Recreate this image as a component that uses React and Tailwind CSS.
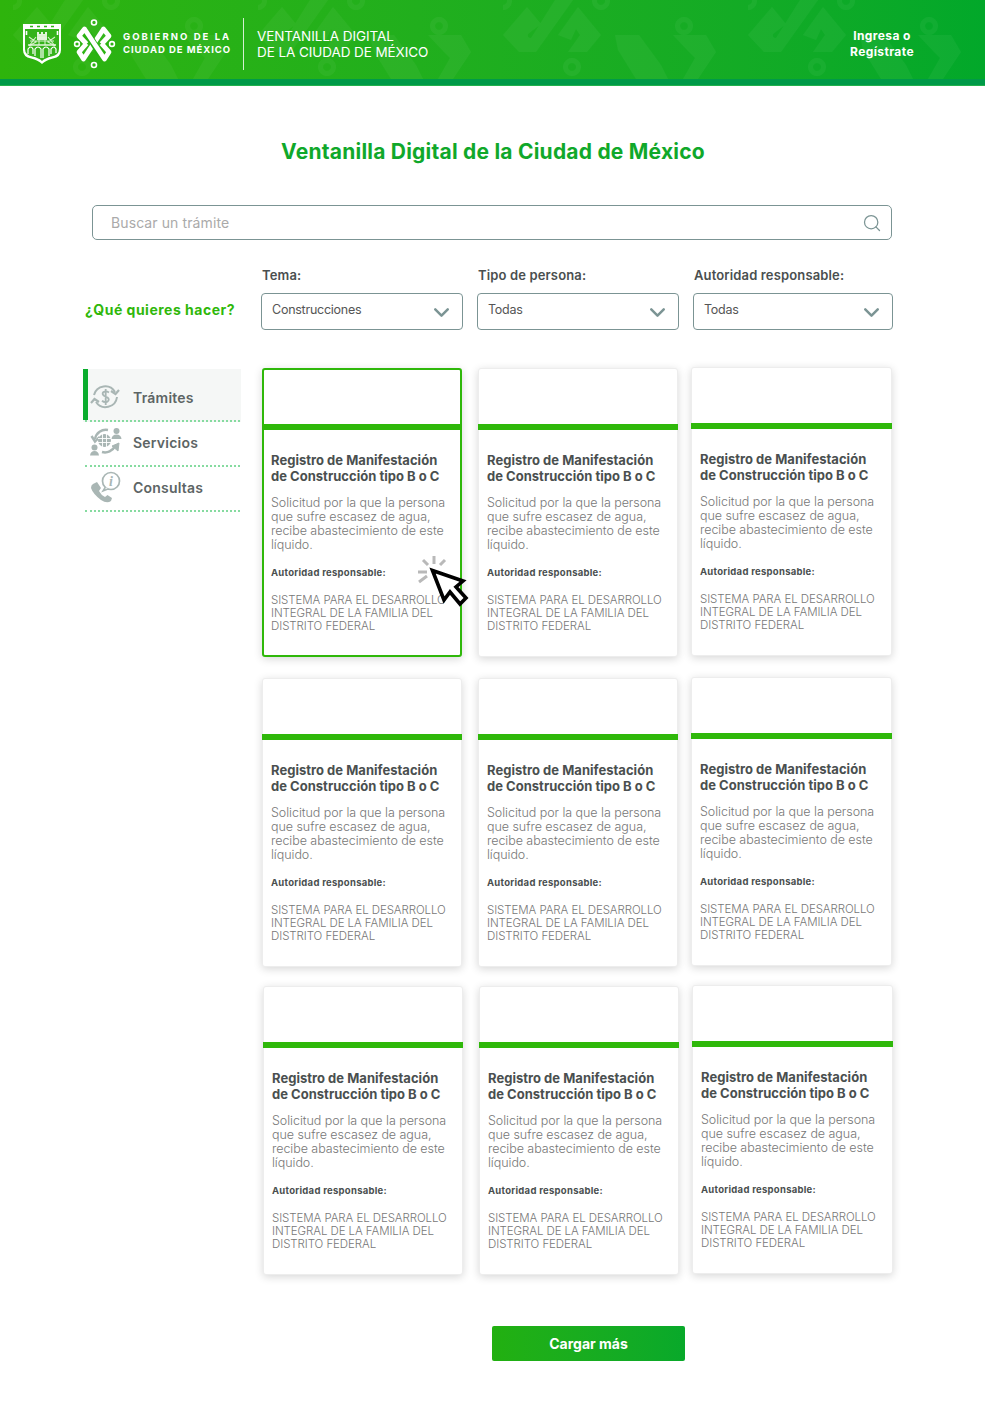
import React from 'react';
import { ChevronDown, Search } from 'lucide-react';

const FONT = { fontFamily: 'Inter, "Open Sans", "Liberation Sans", sans-serif' };

// marca de agua del encabezado
const HeaderPattern = () => (
  <svg className="absolute inset-0 h-[79px] w-full" aria-hidden="true">
    <defs>
      <pattern id="cdmx" x="13" y="0" width="245" height="79" patternUnits="userSpaceOnUse">
        <g fill="#fff" fillOpacity="0.045">
          <path d="M0 35 L24 7 L38 24 L25 34 Q24 38 28 38 L52 0 L70 0 L33 52 L16 52 Z" />
          <path d="M55 35 L75 7 L98 35 L84 52 L65 52 L77 35 L73 29 L68 40 Z" />
          <path d="M119 35 L143 35 L165 65 L172 79 L140 79 L122 50 Z" transform="translate(-7 0)" />
          <path d="M170 35 L203 35 L213 52 L195 79 L180 79 L192 58 L186 52 Z" />
          <path fillRule="evenodd" d="M69 58 a9 9 0 1 0 .01 0 Z M69 63 a4 4 0 1 1 -.01 0 Z" />
          <path fillRule="evenodd" d="M181 17 a9 9 0 1 0 .01 0 Z M181 22 a4 4 0 1 1 -.01 0 Z" />
          <path fillRule="evenodd" d="M0 -8 a9 9 0 1 0 .01 0 Z M0 -3 a4 4 0 1 1 -.01 0 Z" />
          <path fillRule="evenodd" d="M98 -8 a9 9 0 1 0 .01 0 Z M98 -3 a4 4 0 1 1 -.01 0 Z" />
        </g>
      </pattern>
    </defs>
    <rect width="100%" height="100%" fill="url(#cdmx)" />
  </svg>
);

const Shield = () => (
  <svg width="40" height="42" viewBox="0 0 40 42" className="shrink-0">
    <path d="M1 1 H39 V27 Q39 34 31 35.5 Q24 37 20 41 Q16 37 9 35.5 Q1 34 1 27 Z" fill="#fff" />
    <path d="M3 6 H37 V26 Q37 32 29.5 33.5 Q23 35 20 38 Q17 35 10.5 33.5 Q3 32 3 26 Z" fill="#35b31a" />
    <path d="M15 9 h2 v2 h2 v-2 h2 v2 h2 v-2 h2 v8 h-10 Z" fill="#e4f5dc" />
    <path d="M7 14 L14 19 L7 23 L14 14 M33 14 L26 19 L33 23 L26 14 M8 18 h24 M15 13 h10 M17 17 v5 M23 17 v5" stroke="#d4f0c8" strokeWidth="1.1" fill="none" />
    <path d="M6 22 h28" stroke="#e4f5dc" strokeWidth="1.5" />
    <path d="M6 31 v-5 q3 -4 5 0 v5 M13 33 v-7 q3 -4 6 0 v9 M21 35 v-9 q3 -4 6 0 v7 M29 31 v-5 q3 -4 5 0 v4" fill="none" stroke="#fff" strokeWidth="1.2" />
    <path d="M4.5 8 v4 M35.5 8 v4" stroke="#fff" strokeWidth="1.6" />
    <path d="M8 3.5 h3 M15 3.5 h3 M22 3.5 h3 M29 3.5 h3" stroke="#35b31a" strokeWidth="1.4" />
  </svg>
);

const Logo = () => (
  <svg width="44" height="50" viewBox="0 0 44 50" className="shrink-0">
    <g fill="none" stroke="#fff" strokeWidth="1.6">
      <circle cx="21" cy="3.5" r="2.5" />
      <circle cx="21" cy="46" r="2.5" />
      <circle cx="4" cy="25" r="2.4" />
      <circle cx="39" cy="25" r="2.4" />
    </g>
    <g fill="none" strokeLinejoin="round">
      <path d="M28.5 25 L36 17 L30.5 10 L10.5 40 L6 33 L13.5 24.5" stroke="#fff" strokeWidth="4.8" />
      <path d="M15 15 L27 35" stroke="#25b012" strokeWidth="7" />
      <path d="M13.5 25 L6 17 L11.5 10 L31.5 40 L36 33 L28.5 24.5" stroke="#fff" strokeWidth="4.8" />
    </g>
  </svg>
);

const Header = () => (
  <header className="relative h-[86px] border-b border-[#22b14c]">
    <div className="relative h-[79px] bg-gradient-to-r from-[#2eb40c] to-[#02a82a]">
      <HeaderPattern />
      <div className="relative flex h-full items-center pl-[22px]">
        <div className="mt-[8px]"><Shield /></div>
        <div className="mt-[8px] ml-[11px]"><Logo /></div>
        <div className="mt-[8px] ml-[6px] w-[115px] text-[9.5px] leading-[12.5px] font-bold tracking-[2.05px] text-white whitespace-nowrap">
          <div>GOBIERNO DE LA</div>
          <div className="tracking-[0.95px]">CIUDAD DE MÉXICO</div>
        </div>
        <div className="mt-[8px] ml-[5px] h-[52px] w-px bg-white/80"></div>
        <div className="mt-[8px] ml-[13px] text-[13.5px] leading-[16px] tracking-[-0.08px] text-white whitespace-nowrap">
          <div>VENTANILLA DIGITAL</div>
          <div>DE LA CIUDAD DE MÉXICO</div>
        </div>
        <div className="absolute top-[28px] left-[832px] w-[100px] text-center text-[12px] leading-[16px] font-bold tracking-[0.4px] text-white">
          <div>Ingresa o</div>
          <div>Regístrate</div>
        </div>
      </div>
    </div>
    <div className="h-[6px] bg-[#009a48]"></div>
  </header>
);

const FilterSelect = ({ label, value, className }) => (
  <div className={className}>
    <div className="pl-px text-[13px] leading-[16px] font-semibold tracking-[0.14px] text-[#4a4f4f]">{label}</div>
    <div className="mt-[10px] flex h-[37px] items-center justify-between rounded-[4px] border border-[#7b9494] pr-[8px] pl-[10px] text-[12.5px] tracking-[-0.25px] text-[#555]">
      <span className="-mt-[2px]">{value}</span>
      <ChevronDown size={25} strokeWidth={2.4} className="mt-[1px] text-[#7b9494]" />
    </div>
  </div>
);

const IconTramites = () => (
  <svg width="32" height="30" viewBox="1 0 32 30" fill="none" stroke="#a9b6b4" strokeWidth="2">
    <path d="M5 13 A11.5 11.5 0 0 1 26 10" />
    <path d="M28 15 A11.5 11.5 0 0 1 7 20" />
    <path d="M30 8 L26.5 12 L22 9" strokeWidth="2.2" />
    <path d="M2 21 L5.5 17 L10 20" strokeWidth="2.2" />
    <path d="M20 10.5 Q17 8.5 14.5 10 Q12.5 12 15 13.8 L18.5 15.5 Q21 17.5 18.5 19.6 Q15.5 21 13 18.8 M16.7 7 V23" strokeWidth="1.8" />
  </svg>
);

const IconServicios = () => (
  <svg width="32" height="30" viewBox="0 0 32 30" fill="none" stroke="#a9b6b4">
    <path d="M5 12 A11 11 0 0 1 18 3" strokeWidth="2.4" />
    <path d="M1.5 9 L5 14.5 L9.5 10" strokeWidth="2.4" />
    <path d="M12 25 A11 11 0 0 0 25 19" strokeWidth="2.6" />
    <path d="M22 19 L29 16 L28 24 Z" fill="#a9b6b4" strokeWidth="1" />
    <circle cx="14.5" cy="13.5" r="6.5" fill="#a9b6b4" strokeWidth="0" />
    <path d="M8 11.5 H21 M8 15.5 H21 M12.5 7 V20 M16.5 7 V20" stroke="#fff" strokeWidth="0.9" />
    <g fill="#a9b6b4" stroke="none">
      <circle cx="26.5" cy="4" r="3" />
      <path d="M21.5 12 Q22 7.5 26.5 7.5 Q31 7.5 31.5 12 Z" />
      <circle cx="4.5" cy="20.5" r="3" />
      <path d="M0 28.5 Q0.5 24 4.5 24 Q8.5 24 9 28.5 Z" />
    </g>
  </svg>
);

const IconConsultas = () => (
  <svg width="32" height="32" viewBox="0 0 32 32" fill="none">
    <path d="M3 13 L7 11 L11 17 L9 20 Q11 24 15 26 L17.5 24 L22 27 L21 30 Q17 33 11 29 Q3 23 1 17 Q1 14 3 13 Z" fill="#a9b6b4" />
    <circle cx="21" cy="10" r="8.5" fill="#fff" stroke="#a9b6b4" strokeWidth="1.7" />
    <path d="M15.5 16 L13 20 L18.5 17.7" stroke="#a9b6b4" strokeWidth="1.5" fill="#fff" />
    <text x="21" y="15" textAnchor="middle" fontSize="14" fontWeight="700" fontStyle="italic" fontFamily='"Liberation Serif", serif' fill="#a9b6b4">i</text>
  </svg>
);

const SIDE_ITEMS = [
  { name: 'Trámites', icon: <IconTramites />, active: true },
  { name: 'Servicios', icon: <IconServicios /> },
  { name: 'Consultas', icon: <IconConsultas /> },
];

const Sidebar = () => (
  <aside className="w-[158px] shrink-0 pt-[1px]">
    {SIDE_ITEMS.map(item => (
      <div key={item.name} className={item.active ? 'bg-[#f5f7f6]' : ''}>
        <div className={`flex items-center ${item.active ? 'h-[51px]' : 'h-[43px] pl-[7px]'}`}>
          {item.active && <div className="mr-[2px] h-full w-[5px] bg-[#0aad2d]"></div>}
          <div className={`flex w-[32px] justify-center ${item.active ? 'mt-[5px]' : '-mt-[3px]'}`}>{item.icon}</div>
          <span className={`ml-[11px] text-[14px] font-semibold tracking-[0.22px] text-[#5d6565] ${item.active ? 'mt-[5px]' : '-mt-[3px]'}`}>{item.name}</span>
        </div>
        <div className="ml-[2px] w-[155px] border-b-2 border-dotted border-[#86dba0]"></div>
      </div>
    ))}
  </aside>
);

const Cursor = () => (
  <svg className="absolute top-[186px] left-[153px]" width="54" height="52" viewBox="0 0 54 52">
    <g stroke="#b9b9b9" strokeWidth="3">
      <path d="M17 0 V8" />
      <path d="M6 4 L11 9" />
      <path d="M28 4 L23 9" />
      <path d="M1 16 H10" />
      <path d="M2 26 L10 20" />
    </g>
    <path d="M15.5 14.5 L27 44 L33 36 L43 48 L49 42 L39 31 L46 25 Z" fill="#fff" stroke="#000" strokeWidth="3.6" strokeLinejoin="miter" />
  </svg>
);

const Card = ({ selected, className = '' }) => (
  <div className={`relative h-[289px] w-[200px] shrink-0 rounded-[3px] bg-white shadow-[0_2px_8px_rgba(0,0,0,0.16)] ${selected ? 'border-2 border-[#2fb80a]' : 'border border-[#ededed]'} ${className}`}>
    <div className={`${selected ? 'mt-[54px]' : 'mt-[55px] -mx-px'} h-[6px] bg-[#2fb80a]`}></div>
    <div className={`${selected ? 'px-[7px]' : 'px-[8px]'} pt-[22px]`}>
      <h3 className="text-[13px] leading-[16px] font-bold tracking-[0.02px] text-[#4a4f4f] whitespace-nowrap">Registro de Manifestación<br />de Construcción tipo B o C</h3>
      <p className="mt-[12px] text-[12.5px] leading-[14px] font-light tracking-[-0.05px] text-[#777] whitespace-nowrap">Solicitud por la que la persona<br />que sufre escasez de agua,<br />recibe abastecimiento de este<br />líquido.</p>
      <p className="mt-[14px] text-[9.5px] leading-[14px] font-bold tracking-[0.27px] text-[#4a4f4f]">Autoridad responsable:</p>
      <p className="mt-[14px] text-[11.5px] leading-[13px] font-light tracking-[-0.08px] text-[#777] whitespace-nowrap">SISTEMA PARA EL DESARROLLO<br />INTEGRAL DE LA FAMILIA DEL<br />DISTRITO FEDERAL</p>
    </div>
    {selected && <Cursor />}
  </div>
);

const CardRow = ({ first, shifted, className = '' }) => (
  <div className={`flex ${shifted ? 'ml-px' : ''} ${className}`}>
    <Card selected={first} />
    <Card className="ml-[16px]" />
    <Card className="ml-[13px] -mt-px w-[201px]" />
  </div>
);

export default function App() {
  return (
    <div className="h-[1407px] bg-white" style={FONT}>
      <Header />
      <main>
        <h1 className="mt-[51px] pl-px text-center text-[21px] leading-[30px] font-bold tracking-[0.22px] text-[#10a82a]">Ventanilla Digital de la Ciudad de México</h1>
        <div className="mx-[92px] mt-[38px] flex h-[35px] w-[800px] items-center justify-between rounded-[5px] border border-[#7b9494] pr-[9px] pl-[18px]">
          <span className="text-[14px] tracking-[0.1px] text-[#aaa]">Buscar un trámite</span>
          <Search size={20} strokeWidth={1.5} className="text-[#7b9494]" />
        </div>
        <div className="mt-[27px] flex items-end">
          <div className="mb-[10px] ml-[85px] w-[176px] text-[14px] font-bold tracking-[0.5px] text-[#2fb80a] whitespace-nowrap">¿Qué quieres hacer?</div>
          <FilterSelect label="Tema:" value="Construcciones" className="w-[202px]" />
          <FilterSelect label="Tipo de persona:" value="Todas" className="ml-[14px] w-[202px]" />
          <FilterSelect label="Autoridad responsable:" value="Todas" className="ml-[14px] w-[200px]" />
        </div>
        <div className="mt-[38px] ml-[83px] flex">
          <Sidebar />
          <div className="ml-[21px]">
            <CardRow first />
            <CardRow className="mt-[21px]" />
            <CardRow shifted className="mt-[19px]" />
            <button className="mt-[51px] ml-[230px] h-[35px] w-[193px] rounded-[2px] bg-gradient-to-r from-[#22b010] to-[#08a92a] text-[14px] font-bold text-white">Cargar más</button>
          </div>
        </div>
      </main>
    </div>
  );
}
